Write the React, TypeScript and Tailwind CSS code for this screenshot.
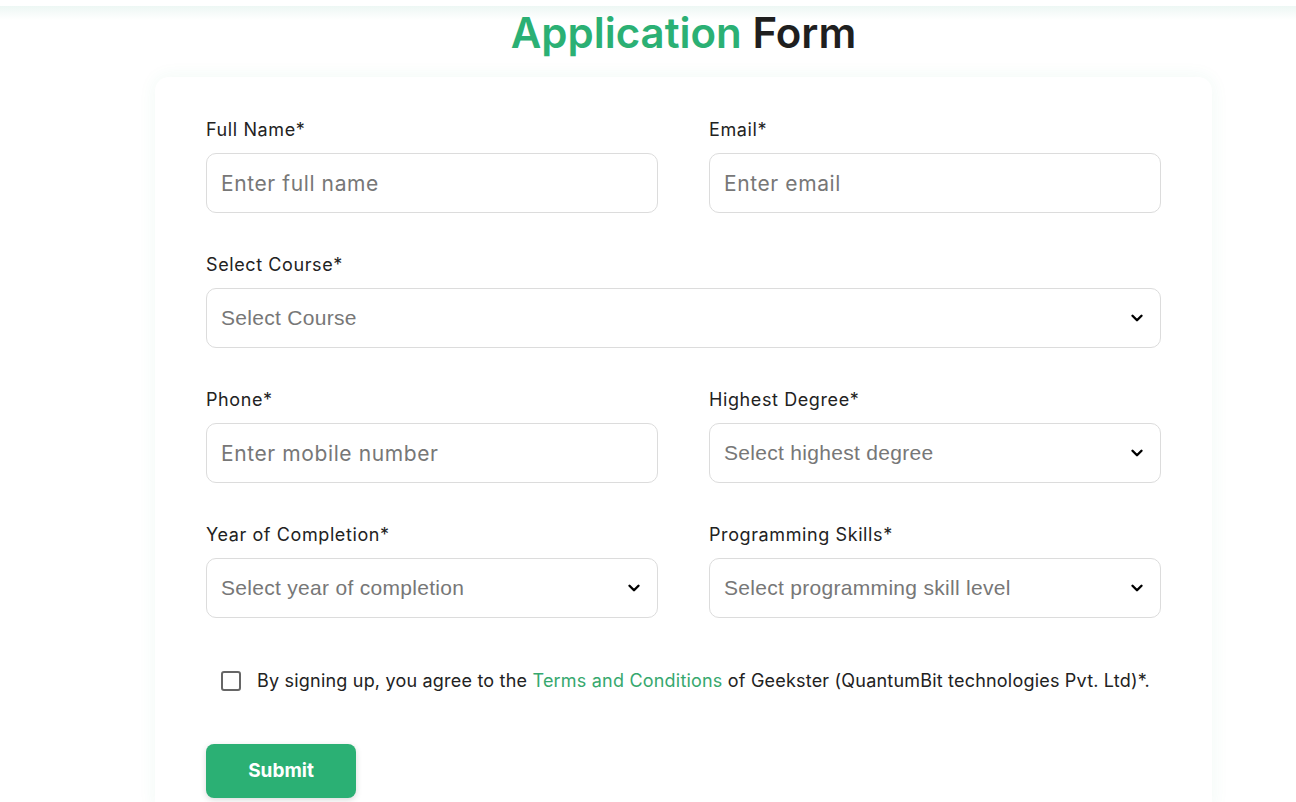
import { ChevronDown } from "lucide-react";

const sans = "font-['Inter','Noto_Sans',sans-serif]";
const arial = "font-['Liberation_Sans',Arial,sans-serif]";

function Label({ children }: { children: string }) {
  return (
    <label className={`mb-[10px] block text-[18px] leading-[26px] tracking-[0.6px] text-[#222] ${sans}`}>
      {children}
    </label>
  );
}

function TextField({ label, placeholder }: { label: string; placeholder: string }) {
  return (
    <div>
      <Label>{label}</Label>
      <input
        placeholder={placeholder}
        className={`h-[60px] w-full rounded-[10px] border border-[#dcdcdc] px-[14px] text-[21px] tracking-[0.6px] text-[#333] outline-none placeholder:text-[#777] ${sans}`}
      />
    </div>
  );
}

function SelectField({ label, placeholder }: { label: string; placeholder: string }) {
  return (
    <div>
      <Label>{label}</Label>
      <div className="flex h-[60px] w-full items-center justify-between rounded-[10px] border border-[#dcdcdc] pl-[14px] pr-[14px]">
        <span className={`text-[21px] tracking-[0.3px] text-[#777] ${arial}`}>{placeholder}</span>
        <ChevronDown size={18} strokeWidth={3.2} className="text-black" />
      </div>
    </div>
  );
}

export default function App() {
  return (
    <div className="min-h-[802px] bg-white">
      {/* header shadow remnant */}
      <div className="h-[6px] bg-white" />
      <div className="h-[14px] bg-gradient-to-b from-[#edf7f4] to-white" />

      <div className="ml-[155px] w-[1057px]">
        <h1 className={`-mt-[9px] text-center text-[42px] font-semibold leading-[44px] ${sans}`}>
          <span className="text-[#2bb074]">Application</span>{" "}
          <span className="text-[#1f1f1f]">Form</span>
        </h1>

        <div className="mt-[22px] rounded-t-[14px] bg-white px-[51px] pb-[10px] pt-[40px] shadow-[0_0_18px_rgba(40,170,120,0.07)]">
          <div className="grid grid-cols-2 gap-x-[51px] gap-y-[39px]">
            <TextField label="Full Name*" placeholder="Enter full name" />
            <TextField label="Email*" placeholder="Enter email" />
            <div className="col-span-2">
              <SelectField label="Select Course*" placeholder="Select Course" />
            </div>
            <TextField label="Phone*" placeholder="Enter mobile number" />
            <SelectField label="Highest Degree*" placeholder="Select highest degree" />
            <SelectField label="Year of Completion*" placeholder="Select year of completion" />
            <SelectField label="Programming Skills*" placeholder="Select programming skill level" />
          </div>

          <div className="mt-[50px] flex items-center pl-[15px]">
            <span className="h-[20px] w-[20px] rounded-[3px] border-2 border-[#666]" />
            <p className={`ml-[16px] text-[18px] leading-[26px] tracking-[0.2px] text-[#222] ${sans}`}>
              By signing up, you agree to the{" "}
              <span className="text-[#36a86e]">Terms and Conditions</span> of Geekster
              (QuantumBit technologies Pvt. Ltd)*.
            </p>
          </div>

          <button
            className={`mt-[50px] h-[54px] w-[150px] rounded-[8px] bg-[#2bb074] text-[19px] font-bold text-white shadow-[0_2px_6px_rgba(0,0,0,0.15)] ${sans}`}
          >
            Submit
          </button>
        </div>
      </div>
    </div>
  );
}
